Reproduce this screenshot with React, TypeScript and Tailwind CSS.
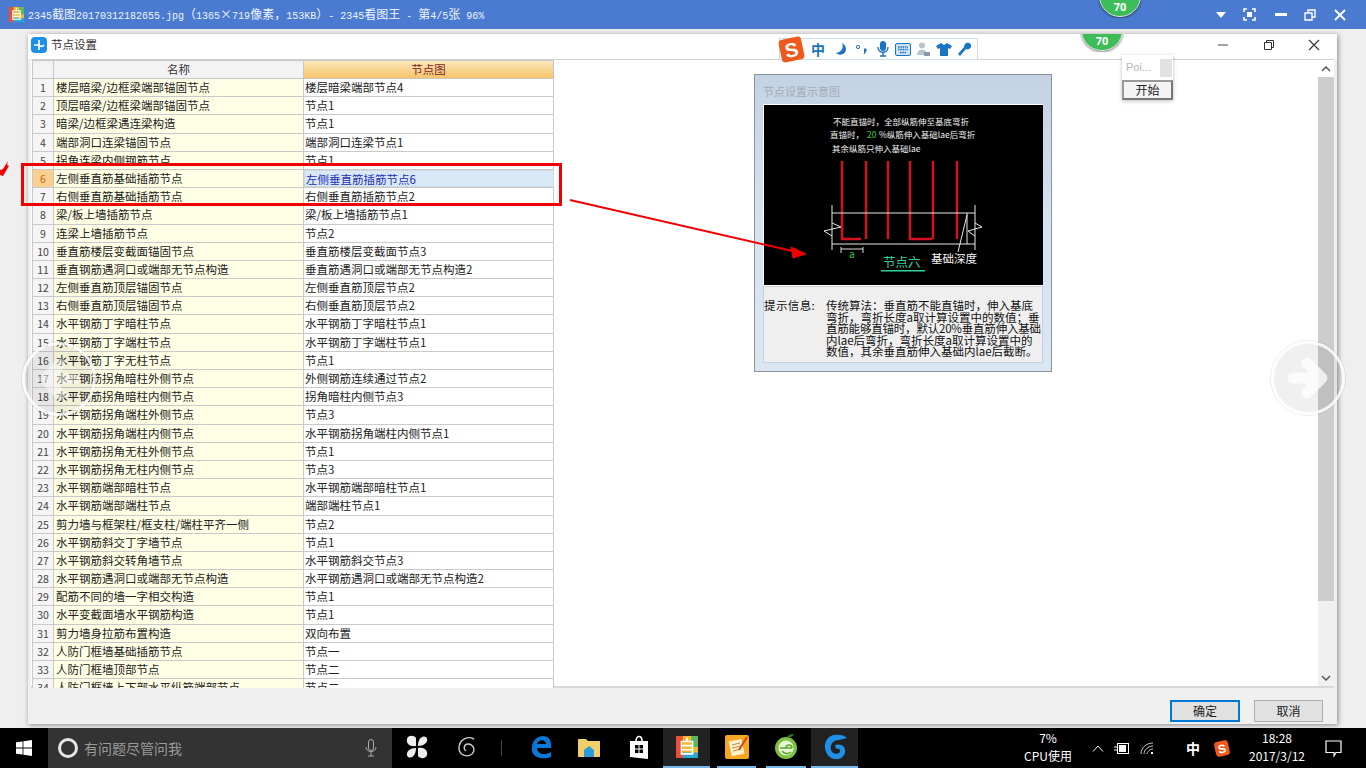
const rows: [string, string][] = [
  ['楼层暗梁/边框梁端部锚固节点', '楼层暗梁端部节点4'],
  ['顶层暗梁/边框梁端部锚固节点', '节点1'],
  ['暗梁/边框梁遇连梁构造', '节点1'],
  ['端部洞口连梁锚固节点', '端部洞口连梁节点1'],
  ['拐角连梁内侧钢筋节点', '节点1'],
  ['左侧垂直筋基础插筋节点', '左侧垂直筋插筋节点6'],
  ['右侧垂直筋基础插筋节点', '右侧垂直筋插筋节点2'],
  ['梁/板上墙插筋节点', '梁/板上墙插筋节点1'],
  ['连梁上墙插筋节点', '节点2'],
  ['垂直筋楼层变截面锚固节点', '垂直筋楼层变截面节点3'],
  ['垂直钢筋遇洞口或端部无节点构造', '垂直筋遇洞口或端部无节点构造2'],
  ['左侧垂直筋顶层锚固节点', '左侧垂直筋顶层节点2'],
  ['右侧垂直筋顶层锚固节点', '右侧垂直筋顶层节点2'],
  ['水平钢筋丁字暗柱节点', '水平钢筋丁字暗柱节点1'],
  ['水平钢筋丁字端柱节点', '水平钢筋丁字端柱节点1'],
  ['水平钢筋丁字无柱节点', '节点1'],
  ['水平钢筋拐角暗柱外侧节点', '外侧钢筋连续通过节点2'],
  ['水平钢筋拐角暗柱内侧节点', '拐角暗柱内侧节点3'],
  ['水平钢筋拐角端柱外侧节点', '节点3'],
  ['水平钢筋拐角端柱内侧节点', '水平钢筋拐角端柱内侧节点1'],
  ['水平钢筋拐角无柱外侧节点', '节点1'],
  ['水平钢筋拐角无柱内侧节点', '节点3'],
  ['水平钢筋端部暗柱节点', '水平钢筋端部暗柱节点1'],
  ['水平钢筋端部端柱节点', '端部端柱节点1'],
  ['剪力墙与框架柱/框支柱/端柱平齐一侧', '节点2'],
  ['水平钢筋斜交丁字墙节点', '节点1'],
  ['水平钢筋斜交转角墙节点', '水平钢筋斜交节点3'],
  ['水平钢筋遇洞口或端部无节点构造', '水平钢筋遇洞口或端部无节点构造2'],
  ['配筋不同的墙一字相交构造', '节点1'],
  ['水平变截面墙水平钢筋构造', '节点1'],
  ['剪力墙身拉筋布置构造', '双向布置'],
  ['人防门框墙基础插筋节点', '节点一'],
  ['人防门框墙顶部节点', '节点二'],
  ['人防门框墙上下部水平纵筋端部节点', '节点二'],
];

const infoLines = [
  '传统算法：垂直筋不能直锚时，伸入基底',
  '弯折，弯折长度a取计算设置中的数值；垂',
  '直筋能够直锚时，默认20%垂直筋伸入基础',
  '内lae后弯折，弯折长度a取计算设置中的',
  '数值，其余垂直筋伸入基础内lae后截断。',
];

const font = { fontFamily: '"Noto Sans CJK SC", "Liberation Sans", sans-serif' };

const AppIcon = ({ size = 16 }: { size?: number }) => (
  <svg width={size} height={size} viewBox="0 0 16 16" className="shrink-0">
    <rect x="0" y="0" width="16" height="16" rx="2" fill="#f4b92f" />
    <rect x="0" y="0" width="5" height="16" fill="#e8503a" />
    <rect x="5" y="12" width="11" height="4" fill="#2aa7d8" />
    <rect x="11" y="0" width="5" height="8" fill="#5cb85c" />
    <path d="M4 4h8v9H4zM4 7h8M4 10h8M8 1v3" fill="none" stroke="#fff" strokeWidth="1.2" />
  </svg>
);

const Badge = ({ className }: { className: string }) => (
  <div className={`absolute overflow-hidden ${className}`}>
    <div className="absolute bottom-[1px] left-[1px] flex h-[42px] w-[42px] items-end justify-center rounded-full border border-[#d8e4d8] bg-[#3dbd57] pb-[3px] text-[11px] font-bold leading-[13px] text-white shadow-[0_1px_3px_rgba(0,0,0,0.5)]">
      70
    </div>
  </div>
);

const NavArrow = ({ left, className }: { left?: boolean; className: string }) => (
  <svg width="76" height="76" viewBox="0 0 76 76" className={`absolute ${className}`}>
    <g transform={left ? 'translate(76 0) scale(-1 1)' : undefined}>
      <circle cx="38" cy="38" r="37.5" fill="none" stroke="#000000" strokeOpacity="0.08" />
      <circle cx="38" cy="38" r="35.5" fill="#000000" fillOpacity="0.06" stroke="#ffffff" strokeOpacity="0.8" strokeWidth="3" />
      <path d="M23 38H52M37 23L52 38L37 53" fill="none" stroke="#ffffff" strokeOpacity={left ? 0.45 : 0.75} strokeWidth="11" strokeLinecap="round" strokeLinejoin="round" />
    </g>
  </svg>
);

const Diagram = () => (
  <svg width="279" height="180" viewBox="0 0 279 180" className="block bg-black" style={font}>
    <g fill="#f2f2f2" fontSize="8.5">
      <text x="69" y="20">不能直锚时，全部纵筋伸至基底弯折</text>
      <text x="66" y="33">直锚时，</text>
      <text x="103" y="33" fill="#35c93f">20</text>
      <text x="115" y="33">%纵筋伸入基础lae后弯折</text>
      <text x="68" y="47">其余纵筋只伸入基础lae</text>
    </g>
    <g fill="none" stroke="#d81020" strokeWidth="2.4">
      <path d="M78 56V134H97M102 56V134M124 56V134M146 56V134H168M169 56V134M193 56V134" />
    </g>
    <g fill="none" stroke="#e8e8e8" strokeWidth="1">
      <path d="M68 100V145M211 100V145M68 108H211M68 139H211M203 108V139M203 110L194 147" />
      <path d="M68 118L77 122L60 126L68 131M211 118L218 122L204 126L211 131" />
      <path d="M77 142V148M99 142V148M77 144H99" stroke="#dddddd" />
    </g>
    <text x="85" y="153" fill="#35c93f" fontSize="10">a</text>
    <text x="119" y="162" fill="#35d0a0" fontSize="12.5">节点六</text>
    <rect x="117" y="165" width="44" height="1.5" fill="#35d0a0" />
    <text x="167" y="158" fill="#f5f5f5" fontSize="11.5">基础深度</text>
  </svg>
);

const SogouBar = () => (
  <div className="absolute left-[779px] top-[38px] flex h-[22px] w-[199px] items-center border border-[#cfdbe8] bg-white">
    <div className="flex h-[23px] w-[23px] -rotate-12 items-center justify-center rounded-[4px] bg-[#ef5a1c] text-[20px] font-bold leading-none text-white" style={{ fontFamily: '"Liberation Sans", sans-serif' }}>
      S
    </div>
    <span className="ml-[8px] w-[16px] text-[14px] font-bold leading-none text-[#1a74c4]" style={font}>中</span>
    <svg width="14" height="14" viewBox="0 0 14 14" className="ml-[7px]"><path d="M8 1C10 5 8 10 2 11C5 14 12 13 12 7C12 4 10 2 8 1Z" fill="#1a74c4" /></svg>
    <svg width="14" height="14" viewBox="0 0 14 14" className="ml-[6px]"><circle cx="4" cy="5" r="1.6" fill="none" stroke="#1a74c4" /><path d="M10 7h2v2l-2 3" fill="#1a74c4" stroke="#1a74c4" /></svg>
    <svg width="14" height="16" viewBox="0 0 14 16" className="ml-[8px]"><rect x="4" y="0" width="6" height="10" rx="3" fill="#1a74c4" /><path d="M2 6C2 13 12 13 12 6M7 12V15M4 15H10" fill="none" stroke="#1a74c4" strokeWidth="1.4" /></svg>
    <svg width="16" height="13" viewBox="0 0 16 13" className="ml-[5px]"><rect x="0.5" y="0.5" width="15" height="12" rx="1.5" fill="#cfe2f4" stroke="#1a74c4" /><path d="M3 4h10M3 6.5h10M5 9.5h6" stroke="#1a74c4" strokeWidth="1.4" strokeDasharray="1.5 0.8" /></svg>
    <svg width="15" height="15" viewBox="0 0 15 15" className="ml-[5px]"><circle cx="6" cy="3.5" r="3" fill="#b7c3cf" /><path d="M1 13C1 6 11 6 11 13Z" fill="#b7c3cf" /><rect x="8" y="10" width="6" height="4" fill="#8a98a6" /></svg>
    <svg width="16" height="15" viewBox="0 0 16 15" className="ml-[5px]"><path d="M5 1L8 3L11 1L16 4L14 7L12 6V14H4V6L2 7L0 4Z" fill="#1a74c4" /></svg>
    <svg width="15" height="15" viewBox="0 0 15 15" className="ml-[5px]"><path d="M9 1C12 0 15 2 14 5C13 7 11 8 9 7L3 14L1 12L7 5C7 3 8 2 9 1Z" fill="#1a74c4" /></svg>
  </div>
);

const PoiWindow = () => (
  <div className="absolute left-[1122px] top-[55px] w-[51px] bg-white shadow-[0_1px_4px_rgba(0,0,0,0.25)]" style={font}>
    <div className="flex h-[25px] items-center justify-between pl-[4px] pr-[1px]">
      <span className="text-[11px] text-[#b5b5b5]" style={{ fontFamily: '"Liberation Sans", sans-serif' }}>Poi...</span>
      <div className="h-[18px] w-[12px] bg-[#e2e2e2]" />
    </div>
    <div className="flex h-[20px] items-center justify-center border-2 border-[#777] border-l-[#999] border-t-[#999] bg-[#f4f4f4] text-[12px] leading-none text-[#222]">开始</div>
  </div>
);

const Table = () => (
  <div className="h-[628px] w-[522px] shrink-0 overflow-hidden" style={font}>
    <div className="flex h-[19px] border-y border-[#c6c6c6] text-[11.5px] leading-[17px]">
      <div className="w-[22px] border-x border-[#c6c6c6] bg-[#f3f3f3]" />
      <div className="w-[250px] border-r border-[#c6c6c6] bg-[#f3f3f3] text-center text-[#333]">名称</div>
      <div className="w-[250px] border-r border-[#c6c6c6] bg-gradient-to-b from-[#fbe6b8] to-[#f6c469] text-center text-[#7a2323]">节点图</div>
    </div>
    {rows.map(([name, value], i) => {
      const on = i === 5;
      return (
        <div key={i} className="flex h-[18.19px] border-b border-[#c9c9c9] text-[11.5px] leading-[17px] text-[#222]">
          <div className={`w-[22px] border-x border-[#c9c9c9] text-center text-[10.5px] ${on ? 'bg-[#fbd08f] text-[#c8641c]' : 'bg-[#f5f5f5] text-[#444]'}`}>{i + 1}</div>
          <div className="w-[250px] truncate border-r border-[#c9c9c9] bg-[#ffffe5] pl-[2px]">{name}</div>
          <div className={`w-[250px] truncate border-r border-[#c9c9c9] pl-[1px] ${on ? 'border border-dotted border-[#555] bg-[#d9e8f6] text-[#2230b8]' : 'bg-white'}`}>{value}</div>
        </div>
      );
    })}
  </div>
);

const InfoPanel = () => (
  <div className="h-[298px] w-[298px] border border-[#8d929b] bg-gradient-to-b from-[#c3d3e3] via-[#d6e2f0] to-[#dbe6f3] pl-[8px] pr-[8px]" style={font}>
    <div className="h-[29px] pt-[9px] text-[11px] leading-[14px] text-[#a3abb5]">节点设置示意图</div>
    <div className="border border-white">
      <Diagram />
    </div>
    <div className="flex h-[77px] border border-[#c8d0da] bg-[#efefef] pt-[13px] text-[11.5px] leading-[11.5px] text-[#111]">
      <div className="w-[62px] shrink-0 tracking-[0.4px]">提示信息:</div>
      <div className="w-[215px] whitespace-nowrap">
        {infoLines.map((line, i) => (
          <div key={line} className={i === 2 ? 'tracking-[-0.2px]' : ''}>{line}</div>
        ))}
      </div>
    </div>
  </div>
);

const Scrollbar = () => (
  <div className="flex w-[16px] shrink-0 flex-col bg-[#f0f0f0]">
    <div className="flex h-[17px] items-center justify-center bg-white">
      <svg width="10" height="6" viewBox="0 0 10 6"><path d="M1 5L5 1L9 5" fill="none" stroke="#555" strokeWidth="1.5" /></svg>
    </div>
    <div className="h-[524px] bg-[#cdcdcd]" />
    <div className="flex-1" />
    <div className="flex h-[17px] items-center justify-center bg-[#f0f0f0]">
      <svg width="10" height="6" viewBox="0 0 10 6"><path d="M1 1L5 5L9 1" fill="none" stroke="#555" strokeWidth="1.5" /></svg>
    </div>
  </div>
);

const Dialog = () => (
  <div className="ml-[28px] mt-[5px] flex h-[690px] w-[1309px] flex-col bg-[#f0f0f0] shadow-[1px_1px_5px_rgba(0,0,0,0.45)]" style={font}>
    <div className="flex h-[25px] shrink-0 items-center bg-white pb-[3px] pl-[3px]">
      <svg width="16" height="16" viewBox="0 0 16 16"><rect width="16" height="16" rx="4" fill="#1c8fe8" /><path d="M8 3V13M3 8H8A3 3 0 0 0 13 8" fill="none" stroke="#fff" strokeWidth="1.6" /></svg>
      <span className="ml-[4px] text-[11.5px] text-[#333]">节点设置</span>
      <div className="ml-auto flex items-center">
        <svg width="12" height="12" viewBox="0 0 12 12" className="mr-[34px]"><path d="M1 6H11" stroke="#444" strokeWidth="1" /></svg>
        <svg width="12" height="12" viewBox="0 0 12 12" className="mr-[33px]"><path d="M1.5 3.5H8.5V10.5H1.5ZM3.5 3.5V1.5H10.5V8.5H8.5" fill="none" stroke="#333" strokeWidth="1" /></svg>
        <svg width="12" height="12" viewBox="0 0 12 12" className="mr-[17px]"><path d="M1 1L11 11M11 1L1 11" stroke="#333" strokeWidth="1.1" /></svg>
      </div>
    </div>
    <div className="mx-[3px] flex h-[629px] shrink-0 border-t border-[#d0d0d0] border-b-2 border-b-[#d8d8d8] bg-white pl-[1px]">
      <Table />
      <div className="flex-1 pl-[200px] pt-[14px]">
        <InfoPanel />
      </div>
      <Scrollbar />
    </div>
    <div className="flex flex-1 items-start justify-end gap-[14px] pr-[14px] pt-[12px] text-[12px] leading-[18px] text-[#222]">
      <div className="h-[22px] w-[70px] border-2 border-[#0078d7] bg-[#e1e1e1] text-center">确定</div>
      <div className="h-[22px] w-[69px] border border-[#adadad] bg-[#e1e1e1] pt-[1px] text-center">取消</div>
    </div>
  </div>
);

const Mono = ({ children }: { children: string }) => (
  <span className="text-[10px]" style={{ fontFamily: '"Liberation Mono", monospace' }}>{children}</span>
);

const TitleBar = () => (
  <div className="flex h-[29px] shrink-0 items-center bg-[#4a7bd1] pl-[9px] text-white">
    <AppIcon size={15} />
    <span className="ml-[4px] flex items-baseline whitespace-pre text-[12px] leading-none text-[#eef3fb]" style={font}>
      <Mono>2345</Mono>截图<Mono>20170312182655.jpg</Mono>（<Mono>1365</Mono>×<Mono>719</Mono>像素，<Mono>153KB</Mono>）<Mono>- 2345</Mono>看图王<Mono> - </Mono>第<Mono>4/5</Mono>张<Mono> 96%</Mono>
    </span>
    <div className="ml-auto flex items-center">
      <svg width="10" height="6" viewBox="0 0 10 6" className="mr-[17px]"><path d="M0 0H10L5 6Z" fill="#fff" /></svg>
      <svg width="13" height="13" viewBox="0 0 13 13" className="mr-[19px]"><path d="M1 4V1H4M9 1H12V4M1 9V12H4M9 12H12V9" fill="none" stroke="#fff" strokeWidth="1.6" /><rect x="4" y="4" width="5" height="5" fill="#fff" /></svg>
      <svg width="12" height="3" viewBox="0 0 12 3" className="mr-[17px]"><rect width="12" height="3" fill="#fff" /></svg>
      <svg width="12" height="12" viewBox="0 0 12 12" className="mr-[18px]"><path d="M1 4H8V11H1ZM4 4V1H11V8H8" fill="none" stroke="#fff" strokeWidth="1.4" /></svg>
      <svg width="12" height="12" viewBox="0 0 12 12" className="mr-[20px]"><path d="M1 1L11 11M11 1L1 11" stroke="#fff" strokeWidth="1.8" /></svg>
    </div>
  </div>
);

const TaskSlot = ({ w, underline, active, children }: { w: number; underline?: boolean; active?: boolean; children: React.ReactNode }) => (
  <div style={{ width: w }} className={`flex h-full shrink-0 items-center justify-center border-b-2 ${underline ? 'border-[#76b9ed]' : 'border-transparent'} ${active ? 'bg-[#222]' : ''}`}>
    {children}
  </div>
);

const Taskbar = () => (
  <div className="flex h-[40px] shrink-0 bg-black text-white" style={font}>
    <div className="flex w-[48px] shrink-0 items-center justify-center">
      <svg width="16" height="16" viewBox="0 0 16 16"><path d="M0 2.3L6.6 1.4V7.6H0ZM7.4 1.3L16 0V7.6H7.4ZM0 8.4H6.6V14.6L0 13.7ZM7.4 8.4H16V16L7.4 14.7Z" fill="#fff" /></svg>
    </div>
    <div className="flex w-[344px] shrink-0 items-center bg-[#333] pl-[10px]">
      <div className="h-[20px] w-[20px] rounded-full border-[3px] border-[#e6e6e6]" />
      <span className="ml-[6px] text-[14px] text-[#9a9a9a]">有问题尽管问我</span>
      <svg width="12" height="18" viewBox="0 0 12 18" className="ml-[183px]"><rect x="3.5" y="0.5" width="5" height="11" rx="2.5" fill="none" stroke="#aaa" /><path d="M1 8C1 14 11 14 11 8M6 13V17M3 17H9" fill="none" stroke="#aaa" /></svg>
    </div>
    <TaskSlot w={50}>
      <svg width="22" height="24" viewBox="0 0 22 24"><path d="M10 11C3 12 0 8 1 4C2 0 8 0 10 3ZM12 11C12 4 16 0 20 2C23 5 20 11 12 11ZM12 13C19 12 22 16 21 20C20 24 14 24 12 21ZM10 13C10 20 6 24 2 22C-1 19 2 13 10 13Z" fill="#eeeeee" /></svg>
    </TaskSlot>
    <TaskSlot w={50}>
      <svg width="20" height="22" viewBox="0 0 20 22"><path d="M17 3C9 -1 2 5 2 12C2 19 10 22 15 18C19 14 16 8 11 8C7 8 6 13 9 15" fill="none" stroke="#cccccc" strokeWidth="1.4" /></svg>
    </TaskSlot>
    <div className="my-[12px] ml-[9px] w-px shrink-0 bg-[#444]" />
    <div className="ml-[15px] flex h-full">
      <TaskSlot w={48}>
        <svg width="22" height="24" viewBox="0 0 22 24"><path d="M2 13C2 4 9 1 13 1C19 1 22 6 21 13H7C7 19 15 21 21 17V22C13 25 1 23 2 13ZM7 9H16C16 4 8 4 7 9Z" fill="#0a78d7" /></svg>
      </TaskSlot>
      <TaskSlot w={48}>
        <svg width="22" height="22" viewBox="0 0 22 22"><path d="M0 3H8L10 5H22V21H0Z" fill="#f1d06b" /><path d="M6 21V14H16V21Z" fill="#2b9bdc" /><path d="M6 14L11 10L16 14Z" fill="#2b9bdc" /></svg>
      </TaskSlot>
      <TaskSlot w={48}>
        <svg width="20" height="24" viewBox="0 0 20 24" className="ml-[3px]"><path d="M1 6H19V24L1 22Z" fill="#fff" /><path d="M7 6C7 0 13 0 13 6" fill="none" stroke="#fff" strokeWidth="1.6" /><path d="M6 10H9.5V13.5H6ZM10.5 10H14V13.5H10.5ZM6 14.5H9.5V18H6ZM10.5 14.5H14V18H10.5Z" fill="#000" /></svg>
      </TaskSlot>
    </div>
    <div className="ml-[2px] flex h-full">
      <TaskSlot w={47} underline active>
        <AppIcon size={22} />
      </TaskSlot>
      <div className="w-[7px]" />
      <TaskSlot w={39} underline>
        <svg width="24" height="24" viewBox="0 0 24 24"><rect width="24" height="24" rx="2" fill="#f5a623" /><rect x="5" y="5" width="13" height="15" fill="#fdf1c9" transform="rotate(-12 12 12)" /><path d="M7 10L15 8M7 13L16 11M8 16L16 14" stroke="#b98a3c" /><path d="M14 15L22 2" stroke="#d9421f" strokeWidth="2" /></svg>
      </TaskSlot>
      <div className="w-[10px]" />
      <TaskSlot w={40} underline>
        <svg width="24" height="28" viewBox="0 0 24 28"><circle cx="12" cy="15" r="11" fill="#7fc241" /><circle cx="12" cy="15" r="7.5" fill="#e8f6d6" /><path d="M6 15H18M12 15A3 3 0 0 1 18 15M8 18A6 6 0 0 0 17 19" fill="none" stroke="#5aa52a" strokeWidth="1.6" /><path d="M13 4C15 1 18 1 20 1C19 3 17 5 13 4Z" fill="#1e7a2c" /></svg>
      </TaskSlot>
      <div className="w-[5px]" />
      <TaskSlot w={47} underline active>
        <svg width="26" height="28" viewBox="0 0 26 28"><path d="M18 2C8 0 2 7 3 15C4 23 10 27 16 26C22 25 25 19 22 14C20 11 16 11 13 12L14 16C16 15 18 16 18 18C18 21 13 22 10 19C7 15 9 7 17 7L25 5C23 3 20 2 18 2Z" fill="#1e90e8" /></svg>
      </TaskSlot>
    </div>
    <div className="ml-[152px] flex w-[76px] shrink-0 flex-col items-center pt-[1px] text-[12px] leading-[18px]">
      <span>7%</span>
      <span>CPU使用</span>
    </div>
    <div className="flex shrink-0 items-center">
      <svg width="12" height="7" viewBox="0 0 12 7" className="ml-[6px]"><path d="M1 6.5L6 1L11 6.5" fill="none" stroke="#fff" /></svg>
      <svg width="16" height="11" viewBox="0 0 16 11" className="ml-[10px]"><path d="M0 4H3M0 7H3" stroke="#fff" /><rect x="3.5" y="0.5" width="11" height="10" fill="none" stroke="#fff" /><rect x="5" y="2" width="7" height="7" fill="#fff" /></svg>
      <svg width="14" height="13" viewBox="0 0 14 13" className="ml-[10px]"><path d="M1 12C1 6 6 1 13 1M4 12C4 8 8 4 13 4M7 12C7 10 10 7 13 7" fill="none" stroke="#ccc" /><rect x="11" y="10" width="2" height="2" fill="#fff" /></svg>
      <span className="ml-[32px] text-[14px] font-bold leading-none">中</span>
      <div className="ml-[15px] flex h-[15px] w-[14px] -rotate-12 items-center justify-center rounded-[3px] bg-[#ef5a1c] text-[12px] font-bold leading-none" style={{ fontFamily: '"Liberation Sans", sans-serif' }}>S</div>
    </div>
    <div className="ml-[16px] flex w-[64px] shrink-0 flex-col items-center pt-[1px] text-[12px] leading-[18px]">
      <span>18:28</span>
      <span>2017/3/12</span>
    </div>
    <div className="ml-[16px] flex shrink-0 items-center">
      <svg width="17" height="17" viewBox="0 0 17 17"><path d="M1 1H16V12.5H11L9 16V12.5H1Z" fill="none" stroke="#fff" strokeWidth="1.2" /></svg>
    </div>
  </div>
);

export default function App() {
  return (
    <div className="relative flex h-[768px] w-[1366px] flex-col overflow-hidden bg-[#efefef]">
      <TitleBar />
      <div className="min-h-0 flex-1">
        <Dialog />
      </div>
      <Taskbar />

      <SogouBar />
      <Badge className="left-[1098px] top-0 h-[18px] w-[44px]" />
      <Badge className="left-[1080px] top-[34px] h-[18px] w-[44px]" />
      <PoiWindow />

      <div className="absolute left-[21px] top-[163px] h-[43px] w-[541px] border-[3px] border-[#f00000]" />
      <svg width="240" height="62" viewBox="0 0 240 62" className="absolute left-[569px] top-[198px]">
        <path d="M1 2L228 54" stroke="#f00000" strokeWidth="2" />
        <path d="M237 56L222 49L224 60Z" fill="#f00000" stroke="#f00000" />
      </svg>
      <svg width="10" height="16" viewBox="0 0 10 16" className="absolute left-0 top-[161px]">
        <path d="M8 0L7 4L9 5L3 15L0 14V9L3 8Z" fill="#f00000" />
      </svg>

      <NavArrow left className="left-[21px] top-[341px]" />
      <NavArrow className="left-[1270px] top-[340px]" />
    </div>
  );
}
